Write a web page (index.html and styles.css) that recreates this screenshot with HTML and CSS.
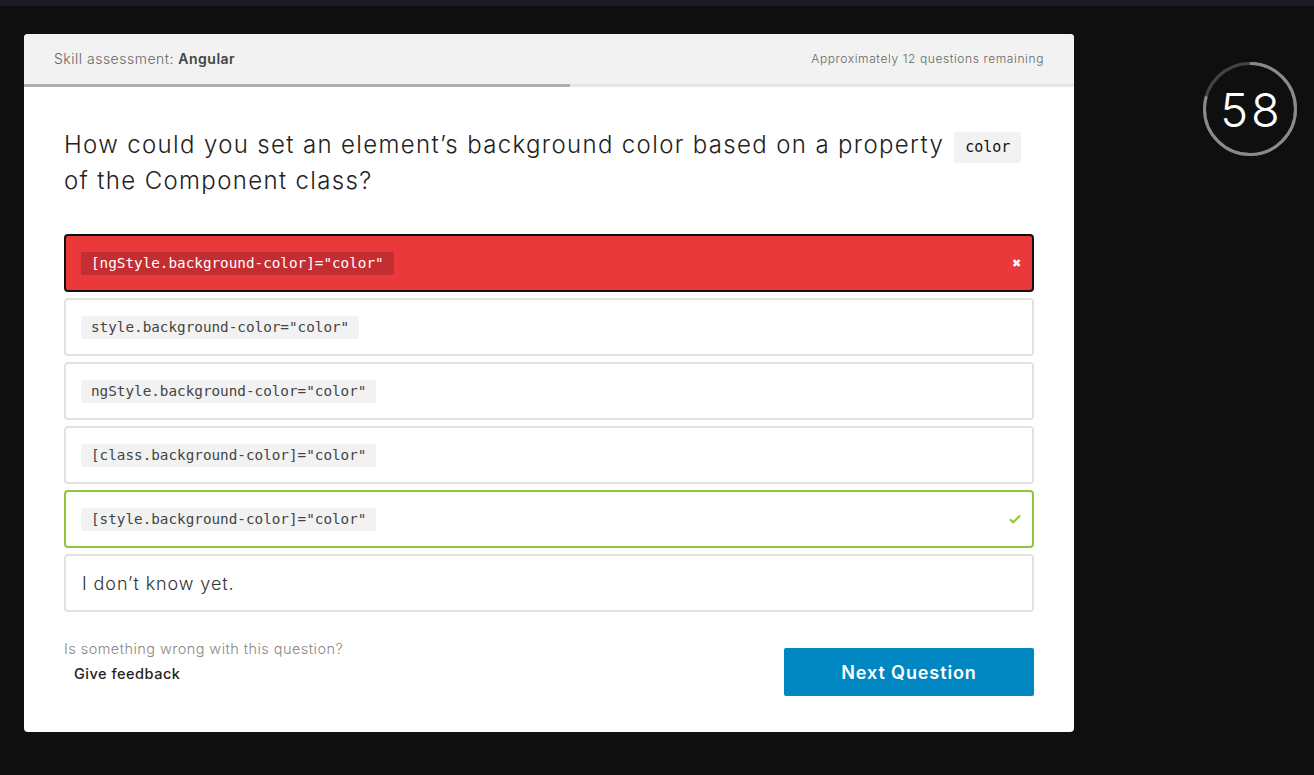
FILE: index.html
```html
<!DOCTYPE html>
<html lang="en">
<head>
<meta charset="utf-8">
<title>Skill assessment: Angular</title>
<link rel="stylesheet" href="styles.css">
</head>
<body>
<div class="topbar"></div>
<div class="stage">
  <main class="card">
    <header class="card-head">
      <div class="skill">Skill assessment: <strong>Angular</strong></div>
      <div class="remaining">Approximately 12 questions remaining</div>
    </header>
    <div class="progress"><div class="progress-fill" style="width:52%"></div></div>
    <section class="card-body">
      <h1 class="question">How could you set an element’s background color based on a property <code class="qcode">color</code> of the Component class?</h1>
      <ul class="options">
        <li class="option wrong"><code class="chip">[ngStyle.background-color]="color"</code><span class="mark x">&#x2716;</span></li>
        <li class="option"><code class="chip">style.background-color="color"</code></li>
        <li class="option"><code class="chip">ngStyle.background-color="color"</code></li>
        <li class="option"><code class="chip">[class.background-color]="color"</code></li>
        <li class="option right"><code class="chip">[style.background-color]="color"</code><span class="mark check"><svg width="12" height="10" viewBox="0 0 12 10"><path d="M1 5.2 L4.3 8.3 L11 1.5" fill="none" stroke="#8cc63f" stroke-width="2"/></svg></span></li>
        <li class="option plain"><span class="idk">I don’t know yet.</span></li>
      </ul>
      <footer class="card-foot">
        <div class="feedback">
          <p class="wrong-q">Is something wrong with this question?</p>
          <a class="give" href="#">Give feedback</a>
        </div>
        <button class="next" type="button">Next Question</button>
      </footer>
    </section>
  </main>
  <aside class="timer">
    <svg width="96" height="96" viewBox="0 0 96 96">
      <circle cx="48" cy="48" r="45.5" fill="none" stroke="#444" stroke-width="3"/>
      <circle cx="48" cy="48" r="45.5" fill="none" stroke="#8a8a8a" stroke-width="3" stroke-dasharray="227 400" transform="rotate(-90 48 48)"/>
    </svg>
    <span class="timer-num">58</span>
  </aside>
</div>
</body>
</html>
```
FILE: styles.css
```css
* { box-sizing: border-box; }
html, body { margin: 0; padding: 0; }
body {
  background: #0f0f0f;
  font-family: "Inter", "Liberation Sans", sans-serif;
  color: #333;
  height: 775px;
  overflow: hidden;
}
.topbar { height: 6px; background: #1a1d23; }
.stage {
  display: flex;
  align-items: flex-start;
  padding: 28px 0 0 24px;
}
.card {
  width: 1050px;
  background: #fff;
  border-radius: 4px;
  overflow: hidden;
}
.card-head {
  height: 50px;
  background: #f2f2f2;
  display: flex;
  align-items: center;
  justify-content: space-between;
  padding: 0 30px 2px;
  color: #666;
}
.skill { font-size: 14px; font-weight: 300; letter-spacing: 0.5px; }
.skill strong { font-weight: 600; color: #444; }
.remaining { font-size: 12px; font-weight: 300; color: #666; letter-spacing: 0.6px; }
.progress { height: 3px; background: #e6e6e6; }
.progress-fill { height: 3px; background: #adadad; }
.card-body { padding: 40px 40px 36px; }
.question {
  margin: 0;
  font-size: 24px;
  line-height: 36px;
  font-weight: 300;
  color: #222;
  letter-spacing: 1.35px;
}
.qcode {
  display: inline-block;
  font-family: "DejaVu Sans Mono", "Liberation Mono", monospace;
  font-size: 15px;
  line-height: 31px;
  padding: 0 11px;
  margin-left: 2px;
  background: #f2f2f2;
  border-radius: 3px;
  color: #111;
  letter-spacing: 0;
  vertical-align: 1px;
}
.options {
  list-style: none;
  margin: 35px 0 0;
  padding: 0;
  display: flex;
  flex-direction: column;
  gap: 6px;
}
.option {
  height: 58px;
  border: 2px solid #e2e2e2;
  border-radius: 4px;
  display: flex;
  align-items: center;
  justify-content: space-between;
  padding: 0 15px;
}
.chip {
  font-family: "DejaVu Sans Mono", "Liberation Mono", monospace;
  font-size: 14.3px;
  line-height: 23px;
  padding: 0 10px;
  background: #f2f2f2;
  color: #444;
  border-radius: 2px;
}
.option.wrong {
  background: #e9393b;
  border-color: #111;
}
.option.wrong .chip { background: #c42d31; color: #fff; }
.option.right { border-color: #8cc63f; }
.mark { display: flex; align-items: center; margin-right: -4px; }
.mark.x { color: #fff; font-size: 11px; }
.idk { font-size: 18px; font-weight: 300; color: #333; margin-left: 1px; letter-spacing: 0.9px; }
.card-foot {
  display: flex;
  justify-content: space-between;
  align-items: flex-start;
  margin-top: 27px;
}
.wrong-q { margin: 0; font-size: 14.5px; font-weight: 300; color: #888; line-height: 20px; letter-spacing: 0.45px; }
.give {
  display: inline-block;
  margin: 5px 0 0 10px;
  font-size: 14.5px;
  font-weight: 500;
  color: #222;
  text-decoration: none;
  line-height: 20px;
  letter-spacing: 0.5px;
}
.next {
  width: 250px;
  height: 48px;
  margin-top: 9px;
  border: 0;
  border-radius: 2px;
  background: #0086c0;
  color: #fff;
  font-family: "Inter", "Liberation Sans", sans-serif;
  font-size: 18px;
  font-weight: 600;
  letter-spacing: 0.9px;
}
.timer {
  position: relative;
  width: 96px;
  height: 96px;
  margin: 27px 0 0 128px;
}
.timer svg { display: block; }
.timer-num {
  position: absolute;
  inset: 0;
  display: flex;
  align-items: center;
  justify-content: center;
  color: #fff;
  font-size: 47px;
  font-weight: 300;
  letter-spacing: 3px;
  padding-left: 3px;
}
```
